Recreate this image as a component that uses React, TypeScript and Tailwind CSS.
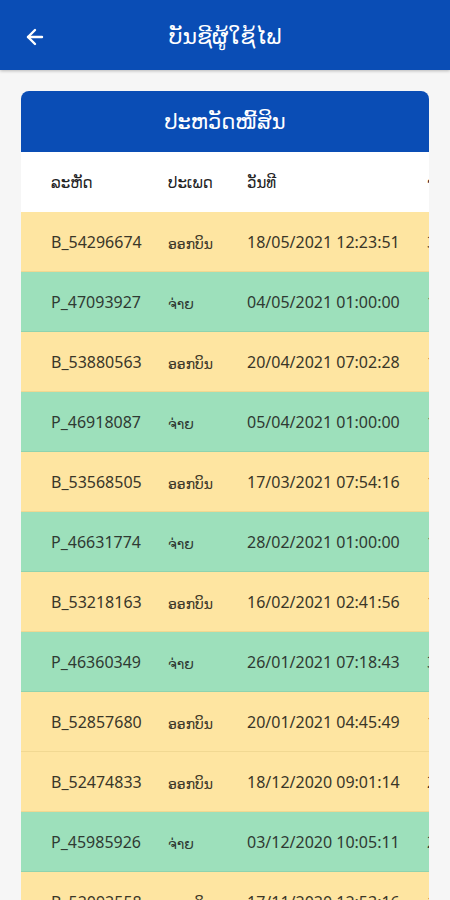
import { ArrowLeft } from "lucide-react";

interface Bill {
  code: string;
  type: "bill" | "pay";
  date: string;
  amount: string;
}

const rows: Bill[] = [
  { code: "B_54296674", type: "bill", date: "18/05/2021 12:23:51", amount: "325,000" },
  { code: "P_47093927", type: "pay", date: "04/05/2021 01:00:00", amount: "150,000" },
  { code: "B_53880563", type: "bill", date: "20/04/2021 07:02:28", amount: "145,000" },
  { code: "P_46918087", type: "pay", date: "05/04/2021 01:00:00", amount: "120,000" },
  { code: "B_53568505", type: "bill", date: "17/03/2021 07:54:16", amount: "118,000" },
  { code: "P_46631774", type: "pay", date: "28/02/2021 01:00:00", amount: "160,000" },
  { code: "B_53218163", type: "bill", date: "16/02/2021 02:41:56", amount: "158,000" },
  { code: "P_46360349", type: "pay", date: "26/01/2021 07:18:43", amount: "300,000" },
  { code: "B_52857680", type: "bill", date: "20/01/2021 04:45:49", amount: "176,000" },
  { code: "B_52474833", type: "bill", date: "18/12/2020 09:01:14", amount: "245,000" },
  { code: "P_45985926", type: "pay", date: "03/12/2020 10:05:11", amount: "220,000" },
  { code: "B_52092558", type: "bill", date: "17/11/2020 12:53:16", amount: "190,000" },
];

function Row({ row }: { row: Bill }) {
  const isPay = row.type === "pay";
  return (
    <div
      className={
        isPay
          ? "flex h-[60px] items-center border-b border-[#8fd3ae] bg-[#9de0bb] text-[16px] text-[#2f3a33]"
          : "flex h-[60px] items-center border-b border-[#f1d892] bg-[#fee5a1] text-[16px] text-[#3a3628]"
      }
    >
      <div className="w-[147px] shrink-0 pl-[30px]">{row.code}</div>
      <div className="w-[79px] shrink-0 pt-[4px] text-[14px]">{isPay ? "ຈ່າຍ" : "ອອກບິນ"}</div>
      <div className="w-[180px] shrink-0">{row.date}</div>
      <div className="w-[120px] shrink-0">{row.amount}</div>
    </div>
  );
}

export default function App() {
  return (
    <div className="min-h-[900px] w-[450px] overflow-hidden bg-[#f6f6f6] font-['Noto_Sans','DejaVu_Sans',sans-serif]">
      <header className="relative flex h-[70px] items-center justify-center bg-[#0a4db5] shadow-[0_1px_3px_rgba(0,0,0,0.25)]">
        <ArrowLeft className="absolute left-[23px] top-[25px] text-white" size={24} strokeWidth={2.4} />
        <h1 className="text-[22px] text-white">ບັນຊີຜູ້ໃຊ້ໄຟ</h1>
      </header>

      <main className="px-[21px] pt-[21px]">
        <div className="rounded-t-[8px] bg-white">
          <div className="flex h-[61px] items-center justify-center rounded-t-[8px] bg-[#0a4db5]">
            <h2 className="text-[21px] font-medium text-white">ປະຫວັດໜີ້ສິນ</h2>
          </div>
          <div className="overflow-x-auto [scrollbar-width:none]">
            <div className="w-[526px]">
              <div className="flex h-[60px] items-center bg-white text-[15px] text-[#222]">
                <div className="w-[147px] shrink-0 pl-[30px]">ລະຫັດ</div>
                <div className="w-[79px] shrink-0">ປະເພດ</div>
                <div className="w-[180px] shrink-0">ວັນທີ</div>
                <div className="w-[120px] shrink-0">ຈຳນວນ</div>
              </div>
              {rows.map((r) => (
                <Row key={r.code} row={r} />
              ))}
            </div>
          </div>
        </div>
      </main>
    </div>
  );
}
